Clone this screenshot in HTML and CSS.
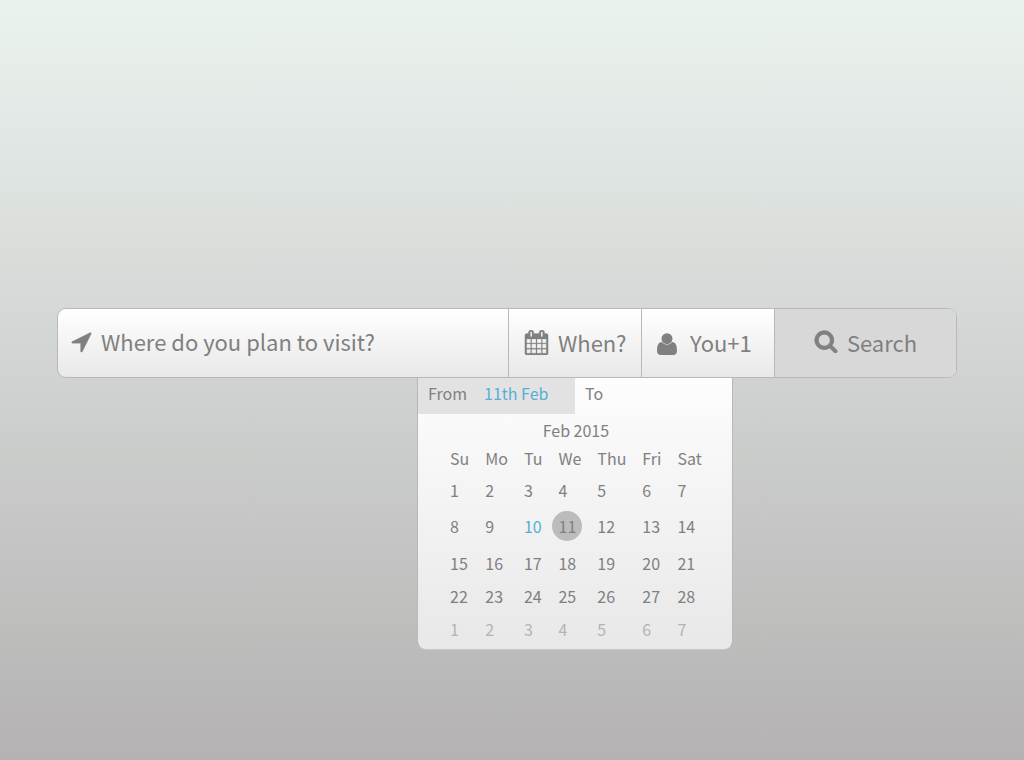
FILE: index.html
```html
<!DOCTYPE html>
<html lang="en">
<head>
  <meta charset="UTF-8">
  <meta name="viewport" content="width=device-width, initial-scale=1">
  <title>Trip Search</title>
  <link rel="stylesheet" href="styles.css">
</head>
<body>

<form class="search-bar">

  <!-- Destination -->
  <div class="place">
    <label for="place" aria-label="Destination">
      <svg class="icon" viewBox="0 0 1792 1792"><path d="M1593 349l-640 1280q-17 35-57 35-5 0-15-2-22-5-35.5-22.5t-13.5-39.5v-576h-576q-22 0-39.5-13.5t-22.5-35.5 4-42 29-30l1280-640q13-7 29-7 27 0 45 19 15 14 18.5 34.5t-6.5 39.5z"/></svg>
    </label>
    <input type="text" id="place" name="place" placeholder="Where do you plan to visit?">
  </div>

  <!-- Dates -->
  <div class="when">
    <button type="button" class="option">
      <svg class="icon" viewBox="0 0 1792 1792"><path d="M192 1664h288v-288h-288v288zm352 0h320v-288h-320v288zm-352-352h288v-320h-288v320zm352 0h320v-320h-320v320zm-352-384h288v-288h-288v288zm736 736h320v-288h-320v288zm-384-736h320v-288h-320v288zm768 736h288v-288h-288v288zm-384-352h320v-320h-320v320zm-352-864v-288q0-13-9.5-22.5t-22.5-9.5h-64q-13 0-22.5 9.5t-9.5 22.5v288q0 13 9.5 22.5t22.5 9.5h64q13 0 22.5-9.5t9.5-22.5zm736 864h288v-320h-288v320zm-384-384h320v-288h-320v288zm384 0h288v-288h-288v288zm32-480v-288q0-13-9.5-22.5t-22.5-9.5h-64q-13 0-22.5 9.5t-9.5 22.5v288q0 13 9.5 22.5t22.5 9.5h64q13 0 22.5-9.5t9.5-22.5zm384-64v1280q0 52-38 90t-90 38h-1408q-52 0-90-38t-38-90v-1280q0-52 38-90t90-38h128v-96q0-66 47-113t113-47h64q66 0 113 47t47 113v96h384v-96q0-66 47-113t113-47h64q66 0 113 47t47 113v96h128q52 0 90 38t38 90z"/></svg>
      When?
    </button>

    <div class="calendar">
      <div class="range">
        <div class="range-field active">
          <label for="from">From</label>
          <input type="text" id="from" name="from" value="11th Feb">
        </div>
        <div class="range-field">
          <label for="to">To</label>
          <input type="text" id="to" name="to">
        </div>
      </div>
      <table class="month">
        <caption>Feb 2015</caption>
        <thead>
          <tr><th>Su</th><th>Mo</th><th>Tu</th><th>We</th><th>Thu</th><th>Fri</th><th>Sat</th></tr>
        </thead>
        <tbody>
          <tr>
            <td><button type="button">1</button></td>
            <td><button type="button">2</button></td>
            <td><button type="button">3</button></td>
            <td><button type="button">4</button></td>
            <td><button type="button">5</button></td>
            <td><button type="button">6</button></td>
            <td><button type="button">7</button></td>
          </tr>
          <tr>
            <td><button type="button">8</button></td>
            <td><button type="button">9</button></td>
            <td><button type="button" class="today">10</button></td>
            <td><button type="button" class="selected">11</button></td>
            <td><button type="button">12</button></td>
            <td><button type="button">13</button></td>
            <td><button type="button">14</button></td>
          </tr>
          <tr>
            <td><button type="button">15</button></td>
            <td><button type="button">16</button></td>
            <td><button type="button">17</button></td>
            <td><button type="button">18</button></td>
            <td><button type="button">19</button></td>
            <td><button type="button">20</button></td>
            <td><button type="button">21</button></td>
          </tr>
          <tr>
            <td><button type="button">22</button></td>
            <td><button type="button">23</button></td>
            <td><button type="button">24</button></td>
            <td><button type="button">25</button></td>
            <td><button type="button">26</button></td>
            <td><button type="button">27</button></td>
            <td><button type="button">28</button></td>
          </tr>
          <tr class="next-month">
            <td><button type="button">1</button></td>
            <td><button type="button">2</button></td>
            <td><button type="button">3</button></td>
            <td><button type="button">4</button></td>
            <td><button type="button">5</button></td>
            <td><button type="button">6</button></td>
            <td><button type="button">7</button></td>
          </tr>
        </tbody>
      </table>
    </div>
  </div>

  <!-- Travellers -->
  <button type="button" class="option people">
    <svg class="icon-user" viewBox="0 0 20 22"><circle cx="10" cy="5.7" r="5.5"/><path d="M4.8 9C1.500 9 0 12.500 0 17.500C0 20.500 1.500 22 4 22H16C18.500 22 20 20.500 20 17.500C20 12.500 18.500 9 15.200 9Q13 11.700 10 11.700T4.800 9z"/></svg>
    You+1
  </button>

  <button type="submit" class="option search">
    <svg class="icon" viewBox="0 0 1792 1792"><path d="M1216 832q0-185-131.5-316.5t-316.5-131.5-316.5 131.5-131.5 316.5 131.5 316.5 316.5 131.5 316.5-131.5 131.5-316.5zm512 832q0 52-38 90t-90 38q-54 0-90-38l-343-342q-179 124-399 124-143 0-273.5-55.5t-225-150-150-225-55.5-273.5 55.5-273.5 150-225 225-150 273.5-55.5 273.5 55.5 225 150 150 225 55.5 273.5q0 220-124 399l343 343q37 37 37 90z"/></svg>
    Search
  </button>
</form>

</body>
</html>
```
FILE: styles.css
```css
* { box-sizing: border-box; }

body {
  margin: 0;
  min-height: 100vh;
  padding: 308px 67px 0 57px;
  background: linear-gradient(#ebf3ef, #b4b2b2);
  font-family: "Noto Sans CJK SC", "Open Sans", sans-serif;
  color: #808080;
}

button, input {
  font: inherit;
  color: inherit;
  border: 0;
  padding: 0;
  background: none;
}
button { cursor: pointer; }
input { min-width: 0; outline: 0; }

.icon {
  width: 25px;
  height: 25px;
  fill: currentColor;
  stroke: currentColor;
  stroke-width: 20px;
}
.icon-user {
  width: 20px;
  height: 22px;
  margin-top: 3px;
  fill: currentColor;
}

/* Search bar */
.search-bar {
  display: flex;
  height: 70px;
  border: 1px solid #b8b8b8;
  border-radius: 9px;
  background: linear-gradient(#fff, #e8e8e8);
  font-size: 22px;
}
.place {
  flex: 1;
  display: flex;
  align-items: center;
  gap: 7px;
  padding: 0 11px 4px;
}
.place label { display: flex; }
.place input { flex: 1; height: 100%; }
.place input::placeholder { color: inherit; opacity: 1; }

.option {
  display: flex;
  align-items: center;
  gap: 9px;
  height: 100%;
  padding: 0 15px 2px;
}
.when {
  position: relative;
  width: 133px;
  border-left: 1px solid #b8b8b8;
}
.people {
  width: 133px;
  gap: 13px;
  border-left: 1px solid #b8b8b8;
}
.search {
  width: 182px;
  justify-content: center;
  border-left: 1px solid #b8b8b8;
  border-radius: 0 8px 8px 0;
  background: #d8d8d8;
}
.search .icon {
  width: 24px;
  height: 24px;
  margin-bottom: 3px;
  stroke-width: 60px;
}

/* Calendar drop-down */
.calendar {
  position: absolute;
  top: 100%;
  left: 50%;
  transform: translateX(-50%);
  width: 316px;
  margin-top: 1px;
  padding-bottom: 4px;
  border: 1px solid #b8b8b8;
  border-top: 0;
  border-bottom-color: #c8c8c8;
  border-radius: 0 0 9px 9px;
  background: linear-gradient(#fdfdfd, #e8e8e8);
  font-size: 16px;
  line-height: 24px;
}
.range { display: flex; }
.range-field {
  flex: 1;
  display: flex;
  gap: 17px;
  height: 36px;
  padding: 3px 10px 9px;
}
.range-field input { flex: 1; width: 0; }
.range-field.active { background: #e2e2e2; }
.range-field.active input { color: #55b0d3; }

.month {
  margin-left: 32px;
  border-spacing: 0;
}
.month caption { padding: 4px 0 0; }
.month th, .month td {
  height: 33px;
  padding: 0 16px 0 0;
  text-align: left;
  font-weight: inherit;
}
.month th { height: 31px; }
.month td:last-child, .month th:last-child { padding-right: 0; }
.month td button { display: block; }
.month .today { color: #55b0d3; }
.month .selected {
  width: 30px;
  height: 30px;
  margin: 5px -7px 5px -6px;
  border-radius: 50%;
  background: #bcbcbc;
}
.next-month { color: #b4b4b4; }
```
